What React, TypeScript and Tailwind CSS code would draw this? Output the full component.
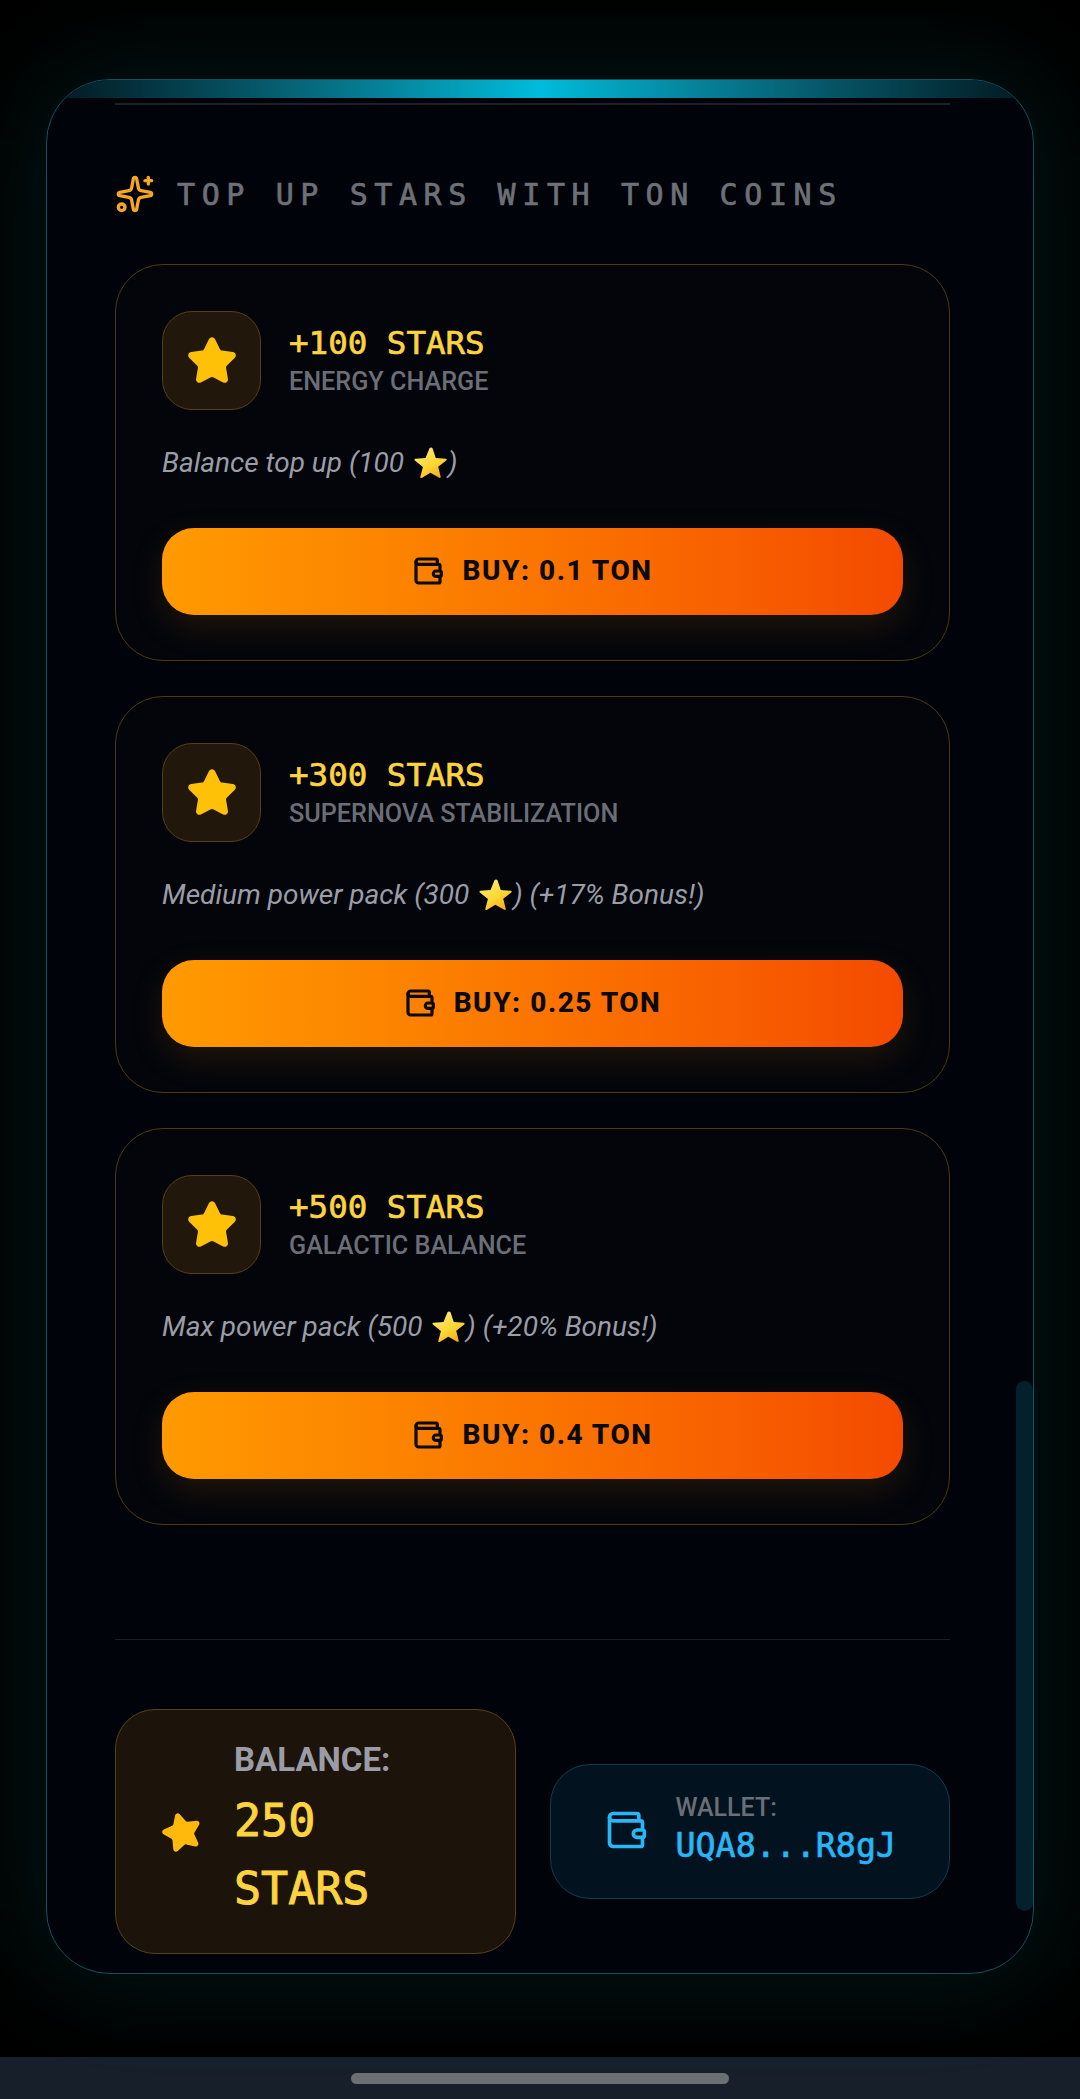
import { Sparkles, Star, Wallet } from "lucide-react";

const packs = [
  { id: 1, title: "+100 STARS", sub: "ENERGY CHARGE", before: "Balance top up (100 ", after: ")", price: "BUY: 0.1 TON" },
  { id: 2, title: "+300 STARS", sub: "SUPERNOVA STABILIZATION", before: "Medium power pack (300 ", after: ") (+17% Bonus!)", price: "BUY: 0.25 TON" },
  { id: 3, title: "+500 STARS", sub: "GALACTIC BALANCE", before: "Max power pack (500 ", after: ") (+20% Bonus!)", price: "BUY: 0.4 TON" },
];

const mono = "font-['DejaVu_Sans_Mono',monospace] [-webkit-text-stroke:0.7px]";
const roboto = "font-['Roboto',sans-serif]";

function EmojiStar({ id }: { id: number }) {
  return (
    <svg viewBox="0 0 24 24" className="ml-[2px] inline-block h-[35px] w-[35px] -translate-y-[1px] align-middle">
      <defs>
        <linearGradient id={"emoji" + id} x1="0.2" y1="0" x2="0.8" y2="1">
          <stop offset="0" stopColor="#ffe97a" />
          <stop offset="0.55" stopColor="#fdd835" />
          <stop offset="1" stopColor="#f4a81c" />
        </linearGradient>
      </defs>
      <path
        d="M13.4 1.6l2.2 6.6 6.9.5c.6 0 .8.8.3 1.2l-5.5 4.3 1.7 6.9c.1.6-.5 1-1 .7L11.900 18.300 6 21.900c-.5.3-1.100-.1-1-.7l1.800-6.800L1.300 9.900C.8 9.500 1 8.800 1.600 8.700l7-.4 2.700-6.700c.3-.8 1.800-.8 2.100 0z"
        fill={"url(#emoji" + id + ")"}
      />
    </svg>
  );
}

function PackCard({ pack }: { pack: (typeof packs)[number] }) {
  return (
    <div className="h-[397px] rounded-[48px] border border-[#4d3a14] bg-[#03050b] px-[46px] pt-[46px]">
      <div className="flex items-center gap-[28px]">
        <div className="flex h-[99px] w-[99px] items-center justify-center rounded-[30px] border border-[#54401c] bg-[#21170a]">
          <Star className="h-[52px] w-[52px] fill-[#ffc107] text-[#ffc107]" strokeWidth={2} />
        </div>
        <div>
          <div className={mono + " text-[32.5px] leading-[40px] text-[#fdd43f]"}>{pack.title}</div>
          <div className={roboto + " mt-[3px] text-[25.2px] font-medium leading-[32px] text-[#6b6e76]"}>{pack.sub}</div>
        </div>
      </div>
      <p className={roboto + " mt-[32px] h-[42px] text-[28px] italic leading-[42px] text-[#9b9da6]"}>
        {pack.before}
        <EmojiStar id={pack.id} />
        {pack.after}
      </p>
      <button className="mt-[44px] flex h-[87px] w-full items-center justify-center gap-[18px] rounded-[32px] bg-gradient-to-r from-[#ff9a00] to-[#f44a00] pb-[2px] shadow-[0_12px_36px_rgba(255,160,0,0.12)]">
        <Wallet className="h-[32px] w-[32px] text-[#0a0a0a]" strokeWidth={2.4} />
        <span className={roboto + " text-[28px] font-extrabold tracking-[1.5px] text-[#0a0a0a]"}>{pack.price}</span>
      </button>
    </div>
  );
}

export default function App() {
  return (
    <div className="flex h-[2099px] w-[1080px] flex-col overflow-hidden bg-black">
      <div className="flex flex-1 flex-col px-[46px] pt-[79px]">
        <div className="relative h-[1895px] overflow-hidden rounded-[64px] border border-[#17505f] bg-[#01030a] pl-[68px] pr-[83px] shadow-[0_0_100px_14px_rgba(0,220,220,0.1)]">
          <div className="absolute inset-x-0 top-0 h-[18px] bg-gradient-to-r from-[#021820] via-[#00bcdc] to-[#021820]" />
          <div className="absolute bottom-[62px] right-0 h-[530px] w-[17px] rounded-full bg-[#04202c]" />

          <div className="mt-[23px] h-[2px] bg-[#1f1f24]" />

          <div className="mt-[66px] flex h-[46px] items-center gap-[22px]">
            <Sparkles className="h-[40px] w-[40px] text-[#f5a623]" strokeWidth={2} />
            <h2 className={mono + " text-[30px] tracking-[6.6px] text-[#6d7077]"}>TOP UP STARS WITH TON COINS</h2>
          </div>

          <div className="mt-[47px] flex flex-col gap-[35px]">
            {packs.map((p) => (
              <PackCard key={p.id} pack={p} />
            ))}
          </div>

          <div className="mt-[114px] h-px bg-[#1c1d22]" />

          <div className="mt-[69px] grid grid-cols-2 items-center gap-[34px]">
            <div className="flex h-[245px] items-center gap-[31px] rounded-[40px] border border-[#54421f] bg-[#1c140a] pl-[45px]">
              <Star className="h-[42px] w-[42px] rotate-[-15deg] fill-[#ffb80c] text-[#ffb80c]" />
              <div>
                <div className={roboto + " mb-[8px] text-[33px] font-bold leading-[38px] text-[#9b9da6]"}>BALANCE:</div>
                <div className={mono + " text-[45px] leading-[68px] text-[#fdd43f] [-webkit-text-stroke:1px]"}>
                  250
                  <br />
                  STARS
                </div>
              </div>
            </div>
            <div className="flex h-[135px] items-center gap-[28px] rounded-[40px] border border-[#0f3d50] bg-[#02131f] pl-[53px]">
              <Wallet className="mb-[3px] h-[44px] w-[44px] text-[#29b6f6]" strokeWidth={2} />
              <div className="-mt-[3px]">
                <div className={roboto + " text-[25px] font-medium leading-[32px] text-[#6b6e76]"}>WALLET:</div>
                <div className={mono + " text-[33.300px] leading-[44px] text-[#29b6f6]"}>UQA8...R8gJ</div>
              </div>
            </div>
          </div>
        </div>
      </div>
      <div className="flex h-[42px] items-center justify-center bg-[#17202a]">
        <div className="h-[11px] w-[378px] rounded-full bg-[#6b7075]" />
      </div>
    </div>
  );
}
